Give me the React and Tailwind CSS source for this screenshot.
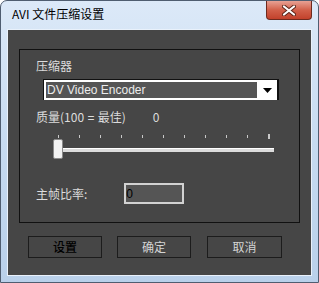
export default function App() {
  const ticks = [0, 1, 2, 3, 4, 5, 6, 7, 8, 9];
  return (
    <div className="w-[319px] h-[283px] bg-white">
      <div className="w-[319px] h-[283px] flex flex-col rounded-t-[7px] border border-[#4f5d70] bg-gradient-to-b from-[#dce9f8] via-[#c7dbf1] to-[#b9d0ea] font-['Noto_Sans_CJK_SC',sans-serif]">
        {/* title bar */}
        <div className="h-[28px] flex items-start justify-between">
          <div className="pl-[11px] pt-[6px] text-[12px] leading-[14px] text-black">AVI 文件压缩设置</div>
          <div className="mr-[6px] w-[46px] h-[19px] rounded-b-[4px] border border-t-0 border-[#6e2a1e] bg-gradient-to-b from-[#e7a194] via-[#d2604a] to-[#c2412b] flex items-center justify-center">
            <svg width="14" height="11" viewBox="0 0 14 11">
              <path d="M2 1.5l10 8M12 1.5l-10 8" stroke="#5a2418" strokeWidth="4" strokeLinecap="round" />
              <path d="M2 1.5l10 8M12 1.5l-10 8" stroke="#fff" strokeWidth="2.2" strokeLinecap="round" />
            </svg>
          </div>
        </div>

        {/* client */}
        <div className="mx-[6px] mb-[6px] flex-1 border border-[#e9f1fb] bg-[#464646] flex flex-col">
          <div className="mt-[19px] mx-[11px] h-[174px] border border-[#111] pl-[16px] pt-[9px]">
            <div className="text-[12px] leading-[14px] text-[#dcdcdc]">压缩器</div>
            <div className="mt-[6px] ml-[7px] w-[236px] h-[21px] border border-[#111] border-r-2 border-b-0 flex">
              <div className="flex-1 border-2 border-white border-r-0 bg-[#555] flex items-center pl-[1px] text-[12px] leading-[14px] text-[#ececec] font-['Liberation_Sans',sans-serif]">
                DV Video Encoder
              </div>
              <div className="w-[20px] bg-white flex items-center justify-center">
                <svg width="9" height="5" viewBox="0 0 9 5">
                  <path d="M0 0h9L4.5 5z" fill="#000" />
                </svg>
              </div>
            </div>

            <div className="mt-[10px] flex text-[12px] leading-[14px] text-[#dcdcdc]">
              <span>
                质量(100<span className="font-['Liberation_Sans',sans-serif] whitespace-pre"> = </span>最佳)
              </span>
              <span className="ml-[27px]">0</span>
            </div>

            {/* slider */}
            <div className="mt-[8px] ml-[17px] w-[221px]">
              <div className="h-[6px] pl-[5px] pr-[4px] flex justify-between items-end">
                {ticks.map((t) => (
                  <div key={t} className="w-[1px] h-[3px] mb-[1px] bg-[#c8c8c8]" />
                ))}
                <div className="w-[2px] h-[5px] bg-[#c8c8c8]" />
              </div>
              <div className="relative h-[20px]">
                <div className="absolute left-[9px] right-0 top-[9px] h-[4px] border-t border-white bg-[#dcdcdc]" />
                <div className="absolute left-0 top-0 w-[10px] h-[20px] rounded-[2px] border border-[#8a8a8a] bg-[#f2f2f2]" />
              </div>
            </div>

            <div className="mt-[24px] flex items-center">
              <span className="text-[12px] leading-[14px] text-[#dcdcdc]">主帧比率:</span>
              <div className="ml-[37px] w-[60px] h-[21px] border-2 border-[#d2d2d2] bg-[#555] flex items-center text-[12px] leading-[14px] text-black font-['Liberation_Sans',sans-serif]">
                0
              </div>
            </div>
          </div>

          {/* buttons */}
          <div className="mt-[13px] ml-[20px] flex text-[12px] leading-[14px]">
            <div className="w-[74px] h-[22px] border border-[#1c1c1c] flex items-center justify-center text-black font-medium">设置</div>
            <div className="ml-[15px] w-[74px] h-[22px] border border-[#1c1c1c] flex items-center justify-center text-[#d4d4d4]">确定</div>
            <div className="ml-[16px] w-[75px] h-[22px] border border-[#1c1c1c] flex items-center justify-center text-[#d4d4d4]">取消</div>
          </div>
        </div>
      </div>
    </div>
  );
}
